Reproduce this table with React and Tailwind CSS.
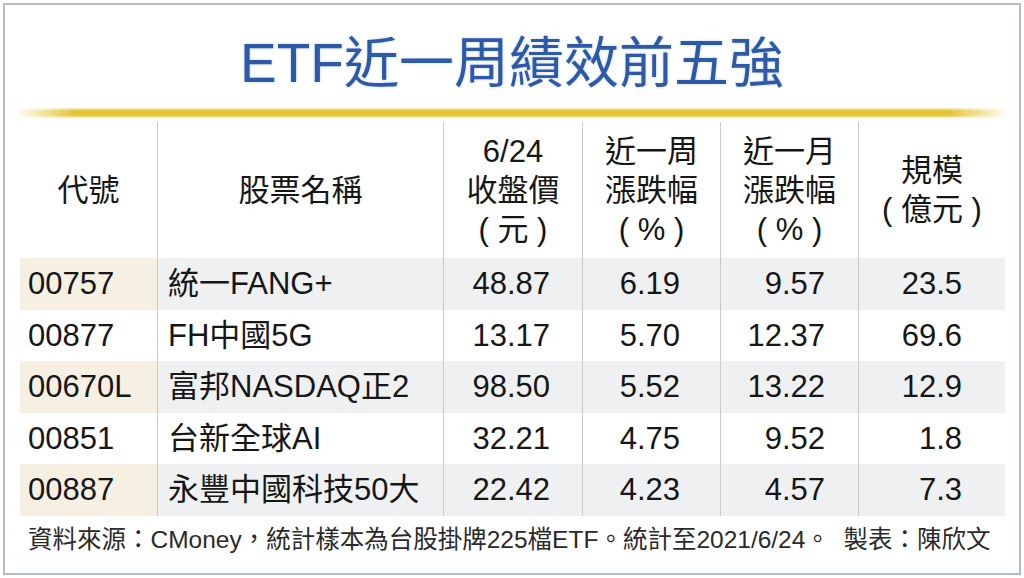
const rows = [
  { code: "00757", name: "統一FANG+", price: "48.87", week: "6.19", month: "9.57", size: "23.5", shade: true },
  { code: "00877", name: "FH中國5G", price: "13.17", week: "5.70", month: "12.37", size: "69.6", shade: false },
  { code: "00670L", name: "富邦NASDAQ正2", price: "98.50", week: "5.52", month: "13.22", size: "12.9", shade: true },
  { code: "00851", name: "台新全球AI", price: "32.21", week: "4.75", month: "9.52", size: "1.8", shade: false },
  { code: "00887", name: "永豐中國科技50大", price: "22.42", week: "4.23", month: "4.57", size: "7.3", shade: true },
]

const cols = "grid grid-cols-[137px_286px_139px_138px_138px_147px]"

function HeadCell({ lines, first }) {
  return (
    <div className={first ? "flex flex-col items-center justify-center" : "flex flex-col items-center justify-center border-l border-[#c9cace]"}>
      {lines.map((l, i) => (
        <span key={i}>{l}</span>
      ))}
    </div>
  )
}

export default function App() {
  return (
    <div lang="zh-TW" className="w-[1024px] h-[578px] bg-white p-[3px] font-['Liberation_Sans','Noto_Sans_CJK_TC',sans-serif] text-[#161616]">
      <div className="h-full border-2 border-[#b3bac8] flex flex-col">
        <div className="h-[104px] pt-[12px] flex items-center justify-center">
          <h1 className="text-[55px] leading-none text-[#2d5aa8] [text-shadow:0_0_3px_rgba(90,130,210,0.35)]">
            ETF近一周績效前五強
          </h1>
        </div>
        <div className="mx-[10px] h-[8px] rounded-full blur-[1px] bg-[linear-gradient(90deg,rgba(228,197,54,0)_0%,#e4c536_6%,#e4c536_94%,rgba(228,197,54,0)_100%)]" />

        <div className="px-[15px]">
          <div className={cols + " mt-[5px] h-[136px] text-[31px] leading-[39px] text-center"}>
            <HeadCell first lines={["代號"]} />
            <HeadCell lines={["股票名稱"]} />
            <HeadCell lines={["6/24", "收盤價", "( 元 )"]} />
            <HeadCell lines={["近一周", "漲跌幅", "( % )"]} />
            <HeadCell lines={["近一月", "漲跌幅", "( % )"]} />
            <HeadCell lines={["規模", "( 億元 )"]} />
          </div>

          {rows.map((r) => (
            <div key={r.code} className={cols + " h-[51.5px] text-[31px] leading-none"}>
              <div className={r.shade ? "flex items-center pl-[8px] bg-[#f6f0e2]" : "flex items-center pl-[8px]"}>{r.code}</div>
              <div className={r.shade ? "flex items-center pl-[10px] border-l border-[#c9cace] bg-[#eff0f2]" : "flex items-center pl-[10px] border-l border-[#c9cace]"}>{r.name}</div>
              <div className={r.shade ? "flex items-center justify-end pr-[32px] border-l border-[#c9cace] bg-[#eff0f2]" : "flex items-center justify-end pr-[32px] border-l border-[#c9cace]"}>{r.price}</div>
              <div className={r.shade ? "flex items-center justify-end pr-[40px] border-l border-[#c9cace] bg-[#eff0f2]" : "flex items-center justify-end pr-[40px] border-l border-[#c9cace]"}>{r.week}</div>
              <div className={r.shade ? "flex items-center justify-end pr-[33px] border-l border-[#c9cace] bg-[#eff0f2]" : "flex items-center justify-end pr-[33px] border-l border-[#c9cace]"}>{r.month}</div>
              <div className={r.shade ? "flex items-center justify-end pr-[43px] border-l border-[#c9cace] bg-[#eff0f2]" : "flex items-center justify-end pr-[43px] border-l border-[#c9cace]"}>{r.size}</div>
            </div>
          ))}

          <div className="h-[50px] flex items-center pl-[8px] text-[24.5px] text-[#2a2a2a] whitespace-pre">
            資料來源：CMoney，統計樣本為台股掛牌225檔ETF。統計至2021/6/24。  製表：陳欣文
          </div>
        </div>
      </div>
    </div>
  )
}
